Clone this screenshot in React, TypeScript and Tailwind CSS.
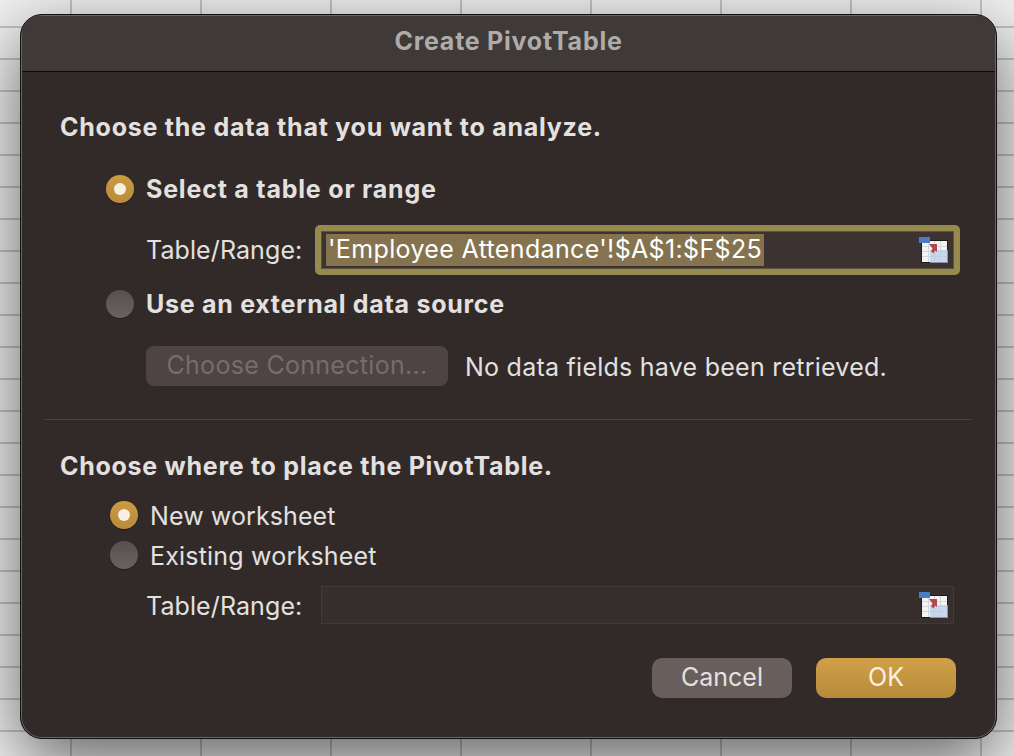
const RangeIcon = () => (
  <svg width="30" height="27" viewBox="0 0 30 27" className="shrink-0">
    <rect x="2" y="3" width="27" height="23" fill="#1c1a1a" />
    <rect x="3" y="4" width="25" height="21" fill="#f3f3f4" />
    <path d="M3 9.5H28M3 14.5H28M3 19.5H28M9.5 4V25M15.5 4V25M21.5 4V25" stroke="#d5d6d9" strokeWidth="1" />
    <rect x="11" y="13" width="18" height="13" fill="#b5cbe6" fillOpacity="0.7" />
    <rect x="0" y="0" width="11" height="6" fill="#4a7cc4" />
    <path d="M10 7H18V15L16 13.5L14.5 16.5L12 14L13.5 11.5Z" fill="#b4474e" />
  </svg>
);

const Radio = ({ on }: { on?: boolean }) => (
  <div
    className={
      on
        ? "w-[28px] h-[28px] rounded-full shrink-0 flex items-center justify-center bg-gradient-to-b from-[#cc9c42] to-[#b98b3b] shadow-[0_1px_1px_rgba(0,0,0,0.35)]"
        : "w-[28px] h-[28px] rounded-full shrink-0 bg-gradient-to-b from-[#565050] to-[#696260] shadow-[0_1px_1px_rgba(0,0,0,0.35)]"
    }
  >
    {on && <div className="w-[12px] h-[12px] rounded-full bg-[#f8f1e3]" />}
  </div>
);

const App = () => {
  return (
    <div className="w-[1014px] h-[756px] overflow-hidden pl-[20px] pt-[14px] bg-[#f1f1f1] bg-[linear-gradient(90deg,#c4c4c4_2px,transparent_2px),linear-gradient(0deg,#c4c4c4_2px,transparent_2px)] bg-[size:130px_32px] bg-[position:70px_28px] font-['Inter','Liberation_Sans',sans-serif] text-[#e3e1e0] text-[25px]">
      <div className="w-[977px] h-[725px] rounded-[22px] border border-[#111] bg-[#322a29] overflow-hidden shadow-[0_22px_70px_rgba(0,0,0,0.6),inset_0_0_0_1px_#6b6664]">
        <div className="h-[56px] mx-px mt-px pb-[4px] border-b border-[#0d0b0b] bg-[#3f3938] flex items-center justify-center font-bold tracking-[0.75px] text-[#aeacab]">
          Create PivotTable
        </div>

        <div className="h-[34px] mt-[38px] pl-[39px] pt-[2px] flex items-center font-bold tracking-[0.75px]">
          Choose the data that you want to analyze.
        </div>

        <div className="h-[34px] mt-[28px] pl-[85px] flex items-center gap-[12px] font-bold tracking-[0.8px]">
          <Radio on />
          <span className="pt-[2px]">Select a table or range</span>
        </div>

        <div className="h-[50px] mt-[19px] pl-[125px] flex items-center">
          <span className="w-[169px] pt-[2px] tracking-[0.1px]">Table/Range:</span>
          <div className="w-[645px] h-[50px] rounded-[5px] border-[6px] border-[#968a4f] bg-[#3b3231] flex items-center justify-between pl-[5px] pr-[5px] shadow-[inset_0_0_0_1px_#5c5340]">
            <span className="h-[32px] flex items-center bg-[#857350] text-white px-[2px] tracking-[0.35px]">'Employee Attendance'!$A$1:$F$25</span>
            <RangeIcon />
          </div>
        </div>

        <div className="h-[34px] mt-[12px] pl-[85px] flex items-center gap-[12px] font-bold tracking-[0.72px]">
          <Radio />
          <span className="pt-[2px]">Use an external data source</span>
        </div>

        <div className="h-[40px] mt-[25px] pl-[125px] flex items-center gap-[17px]">
          <div className="w-[302px] h-[40px] rounded-[8px] bg-[#4d4443] text-[#756e6c] tracking-[0.3px] flex items-center justify-center">
            Choose Connection...
          </div>
          <span className="pt-[3px] tracking-[0.25px]">No data fields have been retrieved.</span>
        </div>

        <div className="h-px mt-[33px] ml-[23px] w-[928px] bg-[#4a4240]" />

        <div className="h-[34px] mt-[29px] pl-[39px] pt-[2px] flex items-center font-bold tracking-[0.72px]">
          Choose where to place the PivotTable.
        </div>

        <div className="h-[34px] mt-[15px] pl-[89px] flex items-center gap-[12px]">
          <Radio on />
          <span className="pt-[4px] tracking-[0.1px]">New worksheet</span>
        </div>

        <div className="h-[34px] mt-[6px] pl-[89px] flex items-center gap-[12px]">
          <Radio />
          <span className="pt-[4px] tracking-[0.2px]">Existing worksheet</span>
        </div>

        <div className="h-[38px] mt-[14px] pl-[125px] flex items-center">
          <span className="w-[175px] pt-[4px] tracking-[0.1px]">Table/Range:</span>
          <div className="w-[633px] h-[38px] border border-[#423a39] bg-[#372f2e] flex items-center justify-end pr-[4px]">
            <RangeIcon />
          </div>
        </div>

        <div className="h-[40px] mt-[34px] pl-[631px] flex gap-[24px]">
          <div className="w-[140px] h-[40px] rounded-[10px] bg-[#685f5d] flex items-center justify-center">Cancel</div>
          <div className="w-[140px] h-[40px] rounded-[10px] bg-gradient-to-b from-[#d1a148] to-[#b78a3b] text-[#f8f1e3] flex items-center justify-center">OK</div>
        </div>
      </div>
    </div>
  );
};

export default App;
